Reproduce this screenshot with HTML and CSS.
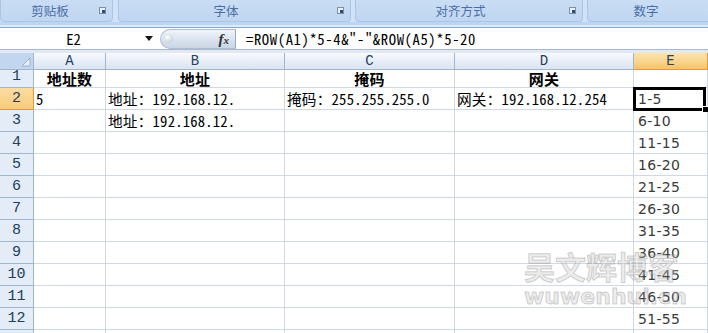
FILE: index.html
```html
<!DOCTYPE html>
<html lang="zh-CN">
<head>
<meta charset="utf-8">
<link rel="stylesheet" href="styles.css">
</head>
<body>
<div class="ribbon">
  <div class="groups">
    <div class="group g1"><span class="glabel">剪贴板</span><svg class="launcher" width="7" height="7" viewBox="0 0 7 7"><rect x="0.5" y="0.5" width="6" height="6" fill="#e9f1fb" stroke="#7d8fa8"/><rect x="3" y="3" width="3" height="3" fill="#2e4d7a"/></svg></div>
    <div class="group g2"><span class="glabel">字体</span><svg class="launcher" width="7" height="7" viewBox="0 0 7 7"><rect x="0.5" y="0.5" width="6" height="6" fill="#e9f1fb" stroke="#7d8fa8"/><rect x="3" y="3" width="3" height="3" fill="#2e4d7a"/></svg></div>
    <div class="group g3"><span class="glabel">对齐方式</span><svg class="launcher" width="7" height="7" viewBox="0 0 7 7"><rect x="0.5" y="0.5" width="6" height="6" fill="#e9f1fb" stroke="#7d8fa8"/><rect x="3" y="3" width="3" height="3" fill="#2e4d7a"/></svg></div>
    <div class="group g4"><span class="glabel">数字</span></div>
  </div>
  <div class="ribbon-base"></div>
</div>

<div class="fbar">
  <div class="namebox mono">E2</div>
  <div class="nb-arrow"><svg width="8" height="5" viewBox="0 0 8 5"><path d="M0 0H8L4 5Z" fill="#111"/></svg></div>
  <div class="fx-pill"><span class="knob"></span><span class="fx">f<span class="fxx">x</span></span></div>
  <div class="formula mono">=ROW(A1)*5-4&amp;"-"&amp;ROW(A5)*5-20</div>
</div>
<div class="strip"></div>

<div class="sheet mono">
  <div class="corner"><svg width="10" height="10" viewBox="0 0 10 10"><path d="M9 1V9H1Z" fill="#e8eef7" stroke="#8aa3c2" stroke-width="0.8"/></svg></div>
  <div class="ch">A</div><div class="ch">B</div><div class="ch">C</div><div class="ch">D</div><div class="ch ch-sel">E</div>

  <div class="rh">1</div><div class="c hdr">地址数</div><div class="c hdr">地址</div><div class="c hdr">掩码</div><div class="c hdr">网关</div><div class="c"></div>
  <div class="rh rh-sel">2</div><div class="c">5</div><div class="c">地址：192.168.12.</div><div class="c">掩码：255.255.255.0</div><div class="c">网关：192.168.12.254</div><div class="c ev sel-cell"><span>1-5</span><div class="sel"></div><div class="handle"></div></div>
  <div class="rh">3</div><div class="c"></div><div class="c">地址：192.168.12.</div><div class="c"></div><div class="c"></div><div class="c ev">6-10</div>
  <div class="rh">4</div><div class="c"></div><div class="c"></div><div class="c"></div><div class="c"></div><div class="c ev">11-15</div>
  <div class="rh">5</div><div class="c"></div><div class="c"></div><div class="c"></div><div class="c"></div><div class="c ev">16-20</div>
  <div class="rh">6</div><div class="c"></div><div class="c"></div><div class="c"></div><div class="c"></div><div class="c ev">21-25</div>
  <div class="rh">7</div><div class="c"></div><div class="c"></div><div class="c"></div><div class="c"></div><div class="c ev">26-30</div>
  <div class="rh">8</div><div class="c"></div><div class="c"></div><div class="c"></div><div class="c"></div><div class="c ev">31-35</div>
  <div class="rh">9</div><div class="c"></div><div class="c"></div><div class="c"></div><div class="c"></div><div class="c ev">36-40</div>
  <div class="rh">10</div><div class="c"></div><div class="c"></div><div class="c"></div><div class="c"></div><div class="c ev">41-45</div>
  <div class="rh">11</div><div class="c"></div><div class="c"></div><div class="c"></div><div class="c"></div><div class="c ev">46-50</div>
  <div class="rh">12</div><div class="c"></div><div class="c"></div><div class="c"></div><div class="c"></div><div class="c ev">51-55</div>
  <div class="rh"></div><div class="c"></div><div class="c"></div><div class="c"></div><div class="c"></div><div class="c"></div>
</div>

<div class="watermark">
  <div class="wm1">吴文辉博客</div>
  <div class="wm2">wuwenhui.cn</div>
</div>
</body>
</html>
```

FILE: styles.css
```css
* { box-sizing: border-box; }

body {
  margin: 0;
  width: 708px;
  height: 333px;
  overflow: hidden;
  background: #ffffff;
  position: relative;
  font-family: "Noto Sans CJK SC", sans-serif;
}

.mono {
  font-family: "Noto Sans CJK SC", sans-serif;
  font-feature-settings: "hwid" 1;
  font-size: 14.67px;
}

/* Ribbon */
.ribbon {
  height: 28px;
  background: #d3e3f6;
  border-bottom: 1px solid #86a9d6;
  overflow: hidden;
}
.groups {
  display: flex;
  gap: 4px;
  height: 22px;
}
.group {
  position: relative;
  height: 22px;
  flex: none;
  display: flex;
  align-items: center;
  justify-content: center;
  padding-right: 17px;
  background: linear-gradient(#c9ddf4, #c0d6f0);
  border: 1px solid #a9c5e8;
  border-top: none;
  border-radius: 0 0 4px 4px;
}
.g1 { width: 113px; padding-right: 13px; }
.g2 { width: 233px; margin-left: 1px; }
.g3 { width: 228px; }
.g4 { width: 135px; }
.glabel {
  font-size: 12.5px;
  line-height: 14px;
  color: #4a6fa6;
}
.launcher {
  position: absolute;
  right: 6px;
  top: 7px;
}
.ribbon-base {
  height: 5px;
  background: linear-gradient(#bcd5f1 0, #bcd5f1 3px, #dcebfa 3px);
}

/* Formula bar */
.fbar {
  height: 22px;
  display: flex;
  align-items: stretch;
  background: #fff;
  border-bottom: 1px solid #a6b9d1;
}
.namebox {
  width: 143px;
  display: flex;
  align-items: center;
  justify-content: center;
  padding-left: 4px;
  line-height: 16px;
  color: #000;
}
.nb-arrow {
  width: 17px;
  display: flex;
  align-items: center;
  padding-left: 2px;
}
.fx-pill {
  width: 76px;
  margin: 1px 0 0;
  position: relative;
  background: linear-gradient(#f1f5fa, #d9e2ee 55%, #cbd6e5);
  border: 1px solid #aebdd1;
  border-right: 1px solid #97a9c0;
  border-radius: 10px 0 0 10px;
  display: flex;
  align-items: center;
  justify-content: flex-end;
  padding-right: 6px;
}
.knob {
  position: absolute;
  left: 3px;
  top: 4px;
  width: 9px;
  height: 9px;
  border-radius: 50%;
  background: radial-gradient(circle at 40% 35%, #ffffff, #c9d3df 70%, #aab7c8);
}
.fx {
  font-family: "Liberation Serif", serif;
  font-style: italic;
  font-weight: bold;
  font-size: 15px;
  line-height: 16px;
  color: #333;
}
.fxx { font-size: 11px; }
.formula {
  flex: 1;
  display: flex;
  align-items: center;
  padding-left: 10px;
  line-height: 16px;
  letter-spacing: 0.6px;
  color: #000;
  white-space: nowrap;
}
.strip {
  height: 3px;
  background: #e3e9f2;
}

/* Sheet grid */
.sheet {
  display: grid;
  grid-template-columns: 34px 72px 179px 170px 179px 74px;
  grid-template-rows: 17px 18px repeat(12, 22px);
  color: #000;
}
.corner {
  background: #c3d6ef;
  border-right: 1px solid #9eb6ce;
  border-bottom: 1px solid #9eb6ce;
  display: flex;
  align-items: flex-end;
  justify-content: flex-end;
  padding: 0 2px 2px 0;
}
.ch {
  background: linear-gradient(#f8fafd, #e5ecf6 60%, #dbe4f1);
  border-right: 1px solid #9eb6ce;
  border-bottom: 1px solid #9eb6ce;
  display: flex;
  align-items: flex-end;
  justify-content: center;
  font-family: "Liberation Mono", monospace;
  font-size: 14px;
  line-height: 15px;
  color: #27415f;
}
.ch-sel {
  background: linear-gradient(#fbe3b1, #f8d38a 60%, #f4c365);
  border-right-color: #f29536;
  border-bottom-color: #f29536;
}
.rh {
  background: #e4ecf7;
  border-right: 1px solid #9eb6ce;
  border-bottom: 1px solid #9eb6ce;
  display: flex;
  align-items: flex-end;
  justify-content: center;
  font-family: "Liberation Mono", monospace;
  font-size: 15px;
  line-height: 18px;
  padding-bottom: 1px;
  color: #203f5c;
}
.rh-sel {
  background: linear-gradient(#fbdca4, #f7cb7a);
  border-bottom-color: #f29536;
  border-right-color: #f29536;
}
.c {
  border-right: 1px solid #d0d7e5;
  border-bottom: 1px solid #d0d7e5;
  display: flex;
  align-items: flex-end;
  padding: 0 2px 1px 2px;
  line-height: 18px;
  letter-spacing: 0.2px;
  white-space: nowrap;
}
.hdr {
  font-weight: bold;
  justify-content: center;
  font-size: 15px;
  line-height: 17px;
  padding-bottom: 0;
}
.ev {
  font-family: "DejaVu Sans", sans-serif;
  font-feature-settings: normal;
  font-size: 14px;
  color: #3a3a3a;
  padding-left: 4px;
  padding-bottom: 2px;
  line-height: 16px;
  letter-spacing: 0.3px;
}
.sel-cell { position: relative; }
.sel {
  position: absolute;
  left: -1px;
  right: 1px;
  top: -1px;
  bottom: -2px;
  border: 3px solid #000;
}
.handle {
  position: absolute;
  right: -1px;
  bottom: -3px;
  width: 6px;
  height: 6px;
  background: #000;
  border: 1px solid #fff;
  border-right: none;
  border-bottom: none;
}

/* Watermark overlay */
.watermark {
  position: absolute;
  left: 524px;
  top: 248px;
  color: rgba(200, 200, 200, 0.35);
  -webkit-text-stroke: 1px rgba(130, 130, 130, 0.35);
  font-weight: bold;
  pointer-events: none;
}
.wm1 {
  font-family: "Noto Sans CJK SC", sans-serif;
  font-size: 31px;
  line-height: 36px;
}
.wm2 {
  font-family: "DejaVu Sans", sans-serif;
  font-size: 22px;
  line-height: 26px;
  letter-spacing: 0px;
}
```
